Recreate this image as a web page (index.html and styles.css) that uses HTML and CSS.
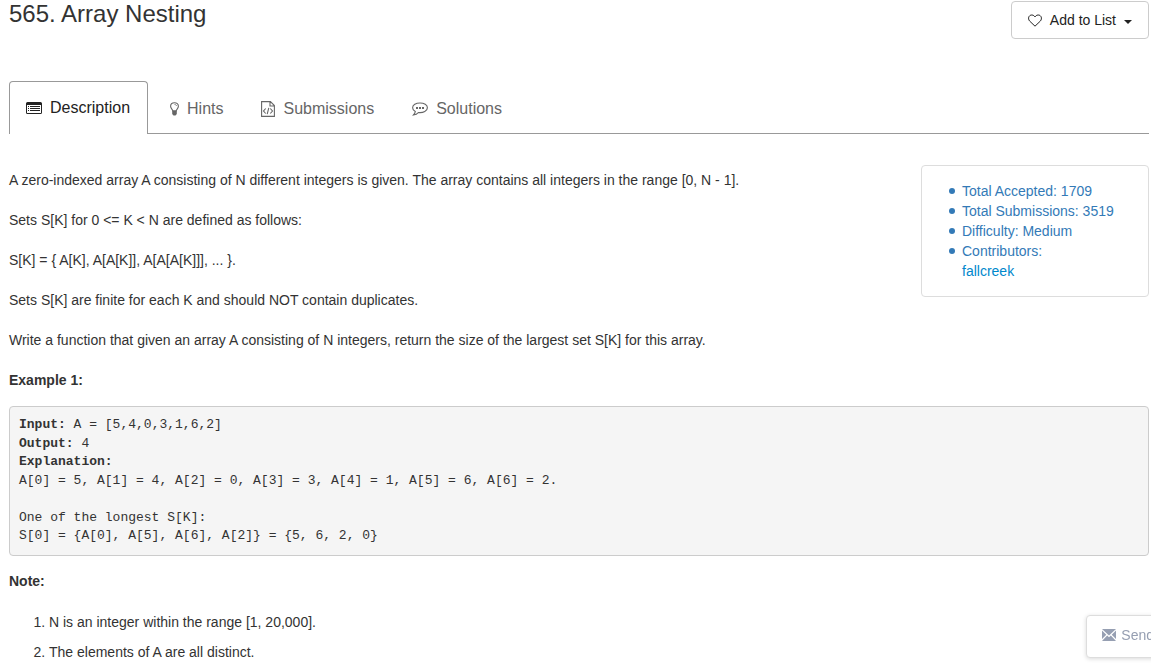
FILE: index.html
```html
<!DOCTYPE html>
<html lang="en">
<head>
<meta charset="utf-8">
<title>565. Array Nesting</title>
<link rel="stylesheet" href="styles.css">
</head>
<body>
<main class="page">
  <header class="header">
    <h1 class="title">565. Array Nesting</h1>
    <button class="add-button" type="button">
      <svg class="heart" width="14" height="13" viewBox="0 0 14 13" aria-hidden="true"><path d="M7 12.200 1.700 7.100C-.5 4.700.7 1 3.800 1 5.500 1 6.300 2 7 3 7.700 2 8.500 1 10.200 1c3.100 0 4.300 3.700 2.100 6.100Z" fill="none" stroke="currentColor" stroke-linejoin="round"/></svg>
      Add to List
      <span class="caret"></span>
    </button>
  </header>

  <nav class="tabs">
    <a class="tab tab-active" href="#description">
      <svg width="16" height="12" viewBox="0 0 16 12" aria-hidden="true"><path d="M0 1.500Q0 0 1.500 0h13Q16 0 16 1.500v9q0 1.500-1.500 1.500h-13Q0 12 0 10.500ZM1 3v8h14V3Z" fill="currentColor" fill-rule="evenodd"/><path d="M2 4h1v1H2zM4 4h10v1H4zM2 6h1v1H2zM4 6h10v1H4zM2 8h1v1H2zM4 8h10v1H4z" fill="currentColor"/></svg>
      Description</a>
    <a class="tab tab-hints" href="#hints">
      <svg width="9" height="14" viewBox="0 0 9 14" aria-hidden="true"><path d="M2.900 9C2.700 7.300.6 6.500.6 4.300.6 2.200 2.300.7 4.500.7s3.900 1.500 3.900 3.600C8.400 6.500 6.300 7.300 6.100 9Z" fill="none" stroke="currentColor" stroke-width="1.100"/><path d="M4.500 2.500c1.200 0 2 .6 2 1.500" fill="none" stroke="currentColor" stroke-width=".8"/><path d="M2.200 8.500h4.600v3.500L5.500 13.500h-2L2.200 12z" fill="currentColor"/></svg>
      Hints</a>
    <a class="tab tab-submissions" href="#submissions">
      <svg width="14" height="16" viewBox="0 0 14 16" aria-hidden="true"><path d="M.6.6h8.800l4 4v10.800H.6ZM9 .6v4.400h4.400M4.700 7.500 2.500 10l2.200 2.500M9.300 7.500l2.200 2.500-2.200 2.500M7.800 6.800l-1.600 6.400" fill="none" stroke="currentColor" stroke-width="1.100"/></svg>
      Submissions</a>
    <a class="tab tab-solutions" href="#solutions">
      <svg width="16" height="14" viewBox="0 0 16 14" aria-hidden="true"><path d="M8 1C3.900 1 .6 3 .6 5.700c0 1.600 1 2.900 2.700 3.700C3.100 11 2.500 12 1.500 13c2.200-.2 3.800-1.100 4.900-2.500 5 .6 9-1.700 9-4.800C15.400 3 12.100 1 8 1Z" fill="none" stroke="currentColor" stroke-width="1.100"/><path d="M4 5h2v2H4zM7 5h2v2H7zM10 5h2v2h-2z" fill="currentColor"/></svg>
      Solutions</a>
  </nav>

  <article class="question">
    <div class="intro">
      <div class="statement">
        <p>A zero-indexed array A consisting of N different integers is given. The array contains all integers in the range [0, N - 1].</p>
        <p>Sets S[K] for 0 &lt;= K &lt; N are defined as follows:</p>
        <p>S[K] = { A[K], A[A[K]], A[A[A[K]]], ... }.</p>
        <p>Sets S[K] are finite for each K and should NOT contain duplicates.</p>
        <p>Write a function that given an array A consisting of N integers, return the size of the largest set S[K] for this array.</p>
        <p><strong>Example 1:</strong></p>
      </div>
      <aside class="info">
        <ul class="info-list">
          <li>Total Accepted: 1709</li>
          <li>Total Submissions: 3519</li>
          <li>Difficulty: Medium</li>
          <li>Contributors:<br><a class="info-link" href="#fallcreek">fallcreek</a></li>
        </ul>
      </aside>
    </div>
<pre class="example"><b>Input:</b> A = [5,4,0,3,1,6,2]
<b>Output:</b> 4
<b>Explanation:</b>
A[0] = 5, A[1] = 4, A[2] = 0, A[3] = 3, A[4] = 1, A[5] = 6, A[6] = 2.

One of the longest S[K]:
S[0] = {A[0], A[5], A[6], A[2]} = {5, 6, 2, 0}</pre>
    <p><strong>Note:</strong></p>
    <ol class="notes">
      <li>N is an integer within the range [1, 20,000].</li>
      <li>The elements of A are all distinct.</li>
    </ol>
  </article>
</main>
<button class="feedback" type="button">
  <svg width="14" height="12" viewBox="0 0 14 12" aria-hidden="true"><path d="M0 0h14L7 6.500ZM0 1.500 4.300 5.700 0 10ZM14 1.500 9.700 5.700 14 10ZM0 12l5.200-5.500L7 8.200l1.800-1.700L14 12Z" fill="currentColor"/></svg>
  Send
</button>
</body>
</html>
```
FILE: styles.css
```css
* { box-sizing: border-box; }

body {
  margin: 0;
  overflow: hidden;
  background: #fff;
  color: #333;
  font: 14px/20px "Liberation Sans", Arial, sans-serif;
}

button { font: inherit; background: #fff; cursor: pointer; }
a { text-decoration: none; }
svg { flex: none; }
p { margin: 0 0 20px; }

.page { padding: 1px 2px 0 9px; }

.header {
  display: flex;
  justify-content: space-between;
  align-items: flex-start;
  height: 80px;
}

.title {
  margin: 0;
  font-size: 24px;
  line-height: 26px;
  font-weight: 400;
}

.add-button {
  display: flex;
  align-items: center;
  gap: 8px;
  height: 38px;
  padding: 0 16px;
  border: 1px solid #ccc;
  border-radius: 4px;
  color: #222;
  white-space: nowrap;
}

.caret {
  margin-top: 3px;
  border: 4px solid transparent;
  border-top-color: currentColor;
  border-bottom: 0;
}

.tabs {
  display: flex;
  border-bottom: 1px solid #999;
  font-size: 16px;
}

.tab {
  display: flex;
  align-items: center;
  gap: 8px;
  height: 52px;
  padding: 3px 16px 0;
  color: #666;
}

.tab-active {
  height: 53px;
  margin-bottom: -1px;
  padding: 0 17px 0 16px;
  border: 1px solid #999;
  border-bottom: 0;
  border-radius: 4px 4px 0 0;
  background: #fff;
  color: #222;
}

.tab-hints,
.tab-submissions,
.tab-solutions { padding-left: 22px; }

.question { padding-top: 31px; }

.intro {
  display: flex;
  justify-content: space-between;
  align-items: flex-start;
  margin-bottom: -4px;
}

.statement { padding-top: 5px; }

.info {
  flex: none;
  width: 20%;
  padding: 15px 0;
  border: 1px solid #ddd;
  border-radius: 4px;
  color: #337ab7;
}

.info-list { margin: 0; padding-left: 40px; }
.info-link { color: #0088cc; }

.info-list { list-style: none; }

.info-list li::before {
  content: "";
  float: left;
  width: 6px;
  height: 6px;
  margin: 7px 0 0 -13px;
  border-radius: 50%;
  background: currentColor;
}

.example {
  margin: 0 0 15px;
  padding: 9px;
  border: 1px solid #ccc;
  border-radius: 4px;
  background: #f5f5f5;
  font: 13px/1.43 "Liberation Mono", "Courier New", monospace;
}

.notes { margin: 0; padding: 1px 0 0 40px; }
.notes li { margin-bottom: 10px; }

.feedback {
  position: fixed;
  right: -19px;
  bottom: 10px;
  display: flex;
  align-items: center;
  gap: 5px;
  height: 43px;
  padding: 0 15px 3px;
  border: 1px solid #ddd;
  border-radius: 4px;
  box-shadow: 0 1px 4px rgba(0, 0, 0, 0.15);
  color: #969fb2;
}
```
